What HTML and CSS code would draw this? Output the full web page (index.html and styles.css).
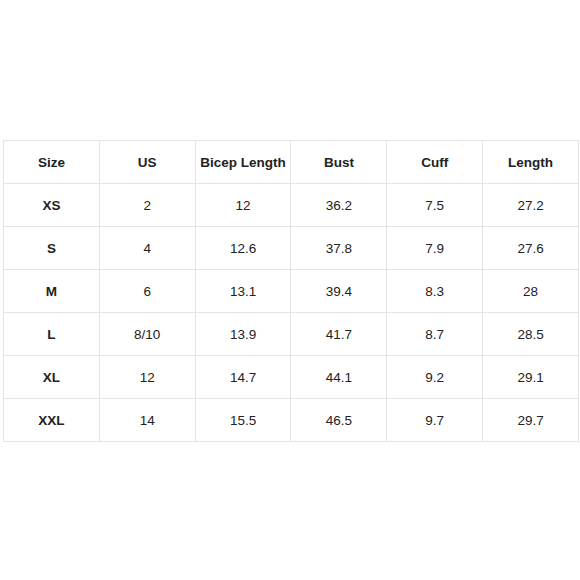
FILE: index.html
```html
<!DOCTYPE html>
<html>
<head>
<meta charset="utf-8">
<link rel="stylesheet" href="styles.css">
</head>
<body>
<div class="page">
<table class="size-table">
<thead>
<tr><th>Size</th><th>US</th><th>Bicep Length</th><th>Bust</th><th>Cuff</th><th>Length</th></tr>
</thead>
<tbody>
<tr><th>XS</th><td>2</td><td>12</td><td>36.2</td><td>7.5</td><td>27.2</td></tr>
<tr><th>S</th><td>4</td><td>12.6</td><td>37.8</td><td>7.9</td><td>27.6</td></tr>
<tr><th>M</th><td>6</td><td>13.1</td><td>39.4</td><td>8.3</td><td>28</td></tr>
<tr><th>L</th><td>8/10</td><td>13.9</td><td>41.7</td><td>8.7</td><td>28.5</td></tr>
<tr><th>XL</th><td>12</td><td>14.7</td><td>44.1</td><td>9.2</td><td>29.1</td></tr>
<tr><th>XXL</th><td>14</td><td>15.5</td><td>46.5</td><td>9.7</td><td>29.7</td></tr>
</tbody>
</table>
</div>
</body>
</html>
```
FILE: styles.css
```css
html, body {
  margin: 0;
  padding: 0;
  background: #fff;
}
.page {
  width: 580px;
  height: 580px;
  padding: 140px 0 0 3px;
  box-sizing: border-box;
}
.size-table {
  border-collapse: collapse;
  table-layout: fixed;
  width: 576px;
  font-family: "Liberation Sans", Arial, sans-serif;
  font-size: 13.5px;
  color: #222;
}
.size-table th,
.size-table td {
  border: 1px solid #e4e4e4;
  height: 42px;
  padding: 0;
  text-align: center;
  vertical-align: middle;
}
.size-table th {
  font-weight: bold;
}
.size-table td {
  font-weight: normal;
}
```
